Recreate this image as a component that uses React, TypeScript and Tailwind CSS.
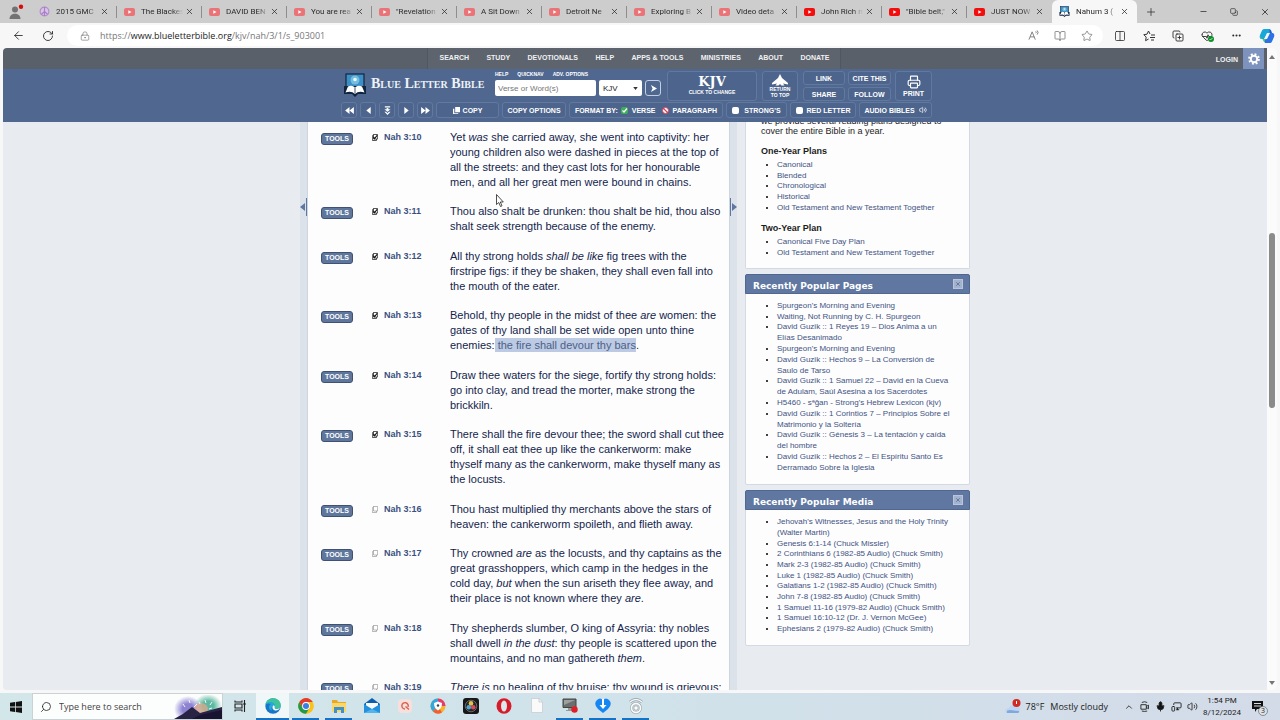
import React from "react";
import { ArrowLeft, RotateCw, LockKeyhole, BookOpen, Star, Plus, Minus, Copy, X, HeartPulse, Ellipsis, Search, ChevronUp, Mic, Volume2, Printer, Columns2, CopyPlus, MonitorSmartphone } from "lucide-react";

const tabs = [
  { title: "2015 GMC", icon: "peace" },
  { title: "The Blackes", icon: "yt-dim" },
  { title: "DAVID BEN", icon: "yt-dim" },
  { title: "You are rea", icon: "yt-dim" },
  { title: "\"Revelation", icon: "yt-dim" },
  { title: "A Sit Down", icon: "yt-dim" },
  { title: "Detroit Ne", icon: "yt-dim" },
  { title: "Exploring B", icon: "yt-dim" },
  { title: "Video deta", icon: "yt-dim" },
  { title: "John Rich m", icon: "yt" },
  { title: "\"Bible belt,\"", icon: "yt" },
  { title: "JUST NOW", icon: "yt" },
  { title: "Nahum 3 (", icon: "blb" }
];

const navItems = ["SEARCH", "STUDY", "DEVOTIONALS", "HELP", "APPS & TOOLS", "MINISTRIES", "ABOUT", "DONATE"];

const verses = [
  { ref: "Nah 3:10", marked: true, text: <>Yet <i>was</i> she carried away, she went into captivity: her<br />young children also were dashed in pieces at the top of<br />all the streets: and they cast lots for her honourable<br />men, and all her great men were bound in chains.</> },
  { ref: "Nah 3:11", marked: true, text: <>Thou also shalt be drunken: thou shalt be hid, thou also<br />shalt seek strength because of the enemy.</> },
  { ref: "Nah 3:12", marked: true, text: <>All thy strong holds <i>shall be like</i> fig trees with the<br />firstripe figs: if they be shaken, they shall even fall into<br />the mouth of the eater.</> },
  { ref: "Nah 3:13", marked: true, text: <>Behold, thy people in the midst of thee <i>are</i> women: the<br />gates of thy land shall be set wide open unto thine<br />enemies:<mark className="bg-[#bccbe3] text-[#4d6088] py-px"> the fire shall devour thy bars</mark>.</> },
  { ref: "Nah 3:14", marked: true, text: <>Draw thee waters for the siege, fortify thy strong holds:<br />go into clay, and tread the morter, make strong the<br />brickkiln.</> },
  { ref: "Nah 3:15", marked: true, text: <>There shall the fire devour thee; the sword shall cut thee<br />off, it shall eat thee up like the cankerworm: make<br />thyself many as the cankerworm, make thyself many as<br />the locusts.</> },
  { ref: "Nah 3:16", marked: false, text: <>Thou hast multiplied thy merchants above the stars of<br />heaven: the cankerworm spoileth, and flieth away.</> },
  { ref: "Nah 3:17", marked: false, text: <>Thy crowned <i>are</i> as the locusts, and thy captains as the<br />great grasshoppers, which camp in the hedges in the<br />cold day, <i>but</i> when the sun ariseth they flee away, and<br />their place is not known where they <i>are</i>.</> },
  { ref: "Nah 3:18", marked: false, text: <>Thy shepherds slumber, O king of Assyria: thy nobles<br />shall dwell <i>in the dust</i>: thy people is scattered upon the<br />mountains, and no man gathereth <i>them</i>.</> },
  { ref: "Nah 3:19", marked: false, text: <><i>There is</i> no healing of thy bruise; thy wound is grievous:</> }
];

const popularPages = [
  ["Spurgeon's Morning and Evening"],
  ["Waiting, Not Running by C. H. Spurgeon"],
  ["David Guzik :: 1 Reyes 19 – Dios Anima a un", "Elías Desanimado"],
  ["Spurgeon's Morning and Evening"],
  ["David Guzik :: Hechos 9 – La Conversión de", "Saulo de Tarso"],
  ["David Guzik :: 1 Samuel 22 – David en la Cueva", "de Adulam, Saúl Asesina a los Sacerdotes"],
  ["H5460 - sᵊḡan - Strong's Hebrew Lexicon (kjv)"],
  ["David Guzik :: 1 Corintios 7 – Principios Sobre el", "Matrimonio y la Soltería"],
  ["David Guzik :: Génesis 3 – La tentación y caída", "del hombre"],
  ["David Guzik :: Hechos 2 – El Espíritu Santo Es", "Derramado Sobre la Iglesia"]
];

const popularMedia = [
  ["Jehovah's Witnesses, Jesus and the Holy Trinity", "(Walter Martin)"],
  ["Genesis 6:1-14 (Chuck Missler)"],
  ["2 Corinthians 6 (1982-85 Audio) (Chuck Smith)"],
  ["Mark 2-3 (1982-85 Audio) (Chuck Smith)"],
  ["Luke 1 (1982-85 Audio) (Chuck Smith)"],
  ["Galatians 1-2 (1982-85 Audio) (Chuck Smith)"],
  ["John 7-8 (1982-85 Audio) (Chuck Smith)"],
  ["1 Samuel 11-16 (1979-82 Audio) (Chuck Smith)"],
  ["1 Samuel 16:10-12 (Dr. J. Vernon McGee)"],
  ["Ephesians 2 (1979-82 Audio) (Chuck Smith)"]
];

const ctl = "flex items-center justify-center rounded-[3px] border border-[#62799f] bg-[#4d658d] font-bold text-white";

function BlbLogo({ className }: { className: string }) {
  return <svg viewBox="0 0 22 24" className={className}>
      <rect x="2" y="1" width="18" height="13" fill="#3c8fc4" stroke="#12253f" strokeWidth="1.2" />
      <circle cx="11" cy="7" r="4.5" fill="#75bde0" />
      <circle cx="11" cy="6.5" r="1.8" fill="#e9f7ff" />
      <path d="M0 13h22v8H14l-3 3-3-3H0z" fill="#10233f" />
      <path d="M1.5 19.5L4 13.500q4-2 7 1 3-3 7-1l2.500 6q-6-2-9.500 1.500-3.500-3.500-9.500-1.500z" fill="#fff" />
      <path d="M11 14.500v6" stroke="#10233f" strokeWidth=".8" />
    </svg>;
}

function TabIcon({ kind }: { kind: string }) {
  if (kind === "peace") {
    return <svg viewBox="0 0 12 12" className="size-[11px] shrink-0">
        <circle cx="6" cy="6" r="4.800" fill="#d9c3e6" stroke="#b18acb" strokeWidth="1.200" />
        <path d="M6 1v10M6 6L2.500 9.300M6 6l3.500 3.300" stroke="#a67fc4" strokeWidth="1.200" />
      </svg>;
  }
  if (kind === "blb") return <BlbLogo className="size-[11px] shrink-0" />;
  return <svg viewBox="0 0 11 8" className="w-[11px] h-2 shrink-0">
      <rect width="11" height="8" rx="2" fill={kind === "yt" ? "#f40d0d" : "#ea7377"} />
      <path d="M4.300 2.200v3.600L7.500 4z" fill="#fff" />
    </svg>;
}

function BrowserChrome() {
  return <header className="shrink-0 font-['Open_Sans','Noto_Sans',sans-serif] text-[#2b2b2b]">
      <div className="h-[23px] bg-[#cdcdcd] flex items-center">
        <button aria-label="Profile" className="w-8 shrink-0 flex justify-center">
          <svg viewBox="0 0 16 16" className="size-4">
            <circle cx="7" cy="5.500" r="3" fill="#727272" />
            <path d="M1.500 15c0-7 11-7 11 0z" fill="#727272" />
            <circle cx="13" cy="2.800" r="2.200" fill="#d80b0b" />
          </svg>
        </button>
        {tabs.map(tab => <div key={tab.title} className={`w-[85px] h-full min-w-0 flex items-center pl-[7px] ${tab.icon === "blb" ? "bg-[#f7f7f7] rounded-t-md" : ""}`}>
            <TabIcon kind={tab.icon} />
            <span className="w-[42px] ml-[6px] font-[Roboto,'Noto_Sans',sans-serif] text-[8px] leading-3 whitespace-nowrap [mask-image:linear-gradient(to_right,black_75%,transparent)]">{tab.title}</span>
            <button aria-label="Close tab" className="ml-[2px]"><X size={9} strokeWidth={2} /></button>
            <span className={`w-px h-3 ml-auto ${tab.icon === "blb" || tab.title === "JUST NOW" ? "" : "bg-[#8e8e8e]"}`}></span>
          </div>)}
        <button aria-label="New tab" className="ml-2"><Plus size={12} strokeWidth={1.500} /></button>
        <div className="ml-auto flex items-center gap-[22px] pr-[10px]">
          <button aria-label="Minimize"><Minus size={9} /></button>
          <button aria-label="Restore"><Copy size={8} className="-scale-x-100 rotate-90" /></button>
          <button aria-label="Close"><X size={10} strokeWidth={2} /></button>
        </div>
      </div>
      <div className="h-[25px] bg-[#f7f7f7] flex items-center">
        <button aria-label="Back" className="ml-3"><ArrowLeft size={13} strokeWidth={1.600} /></button>
        <button aria-label="Reload" className="ml-[17px]"><RotateCw size={12} strokeWidth={1.800} /></button>
        <div className="ml-[13px] h-[21px] flex-1 bg-white rounded-full flex items-center pl-[13px] pr-[10px] text-[#777]">
          <LockKeyhole size={10} strokeWidth={1.600} />
          <span className="ml-[10px] flex-1 text-[9px] leading-3">https://<span className="text-[#1b1b1b]">www.blueletterbible.org</span>/kjv/nah/3/1/s_903001</span>
          <div className="flex items-center gap-[15px]">
            <svg viewBox="0 0 12 12" className="size-[11px]" fill="none" stroke="#777" strokeWidth="1"><path d="M1 10.500L4.500 2l3.500 8.500M2.200 7.500h4.600M8.500 3.500q1-1 0-2M10 5q2-2.200 0-4.500" /></svg>
            <BookOpen size={12} strokeWidth={1.600} />
            <Star size={12} strokeWidth={1.600} />
          </div>
        </div>
        <div className="flex items-center gap-[17px] ml-[11px] pr-[5px]">
          <Columns2 size={12} strokeWidth={1.600} />
          <svg viewBox="0 0 12 12" className="size-3" fill="none" stroke="#333" strokeWidth="1"><path d="M7 4L5.500 1 4 4.200.800 4.700l2.400 2.400-.6 3.600 3-1.700M8 5h4M7 7.500h5M8 10h3" /></svg>
          <CopyPlus size={12} strokeWidth={1.800} />
          <span className="flex items-end">
            <HeartPulse size={12} strokeWidth={1.800} />
            <svg viewBox="0 0 6 6" className="size-[6px] -ml-[5px]"><circle cx="3" cy="3" r="3" fill="#11902b" /><path d="M1.500 3l1 1 2-2" stroke="#fff" fill="none" strokeWidth=".7" /></svg>
          </span>
          <Ellipsis size={11} strokeWidth={2.500} />
          <svg viewBox="0 0 16 16" className="size-4">
            <path d="M5 1h5l2 4H8L5 11H2Q0 10 1 7l2-4.500Q3.700 1 5 1z" fill="#19a6d8" />
            <path d="M11 15H6l-2-4h4l3-6h3q2 1 1 4l-2 4.500Q12.300 15 11 15z" fill="#2d72e4" />
            <path d="M1 8q0 3 3 3h3l-2 3-1-2z" fill="#45c878" />
            <path d="M10 1q2 0 3 4h-2z" fill="#1d5bd0" />
          </svg>
        </div>
      </div>
    </header>;
}

function SiteHeader() {
  return <div className="shrink-0 font-['Liberation_Sans',Arial,sans-serif]">
      <div className="h-[21px] bg-[#596069] flex text-[7px] font-bold text-[#f0f1f3]">
        <div className="flex-1"></div>
        <nav className="w-[414px] pl-3 pr-[10px] flex items-center justify-between bg-[#5d646d] border-x border-[#505761]">
          {navItems.map(item => <a key={item} href="#">{item}</a>)}
        </nav>
        <div className="flex-1 flex items-center justify-end pr-[3px]">
          <a href="#" className="mr-[5px] pt-1">LOGIN</a>
          <button aria-label="Settings" className="w-[21px] h-full bg-[#7d93bd] flex items-center justify-center">
            <svg viewBox="0 0 16 16" className="size-3" fill="none" stroke="#fff">
              <circle cx="8" cy="8" r="4.300" strokeWidth="2.600" />
              <circle cx="8" cy="8" r="6.500" strokeWidth="2.600" strokeDasharray="2.550 2.550" />
            </svg>
          </button>
        </div>
      </div>
      <div className="h-[53px] bg-[#50688f]">
        <div className="w-[594px] mx-auto pl-[3px] pt-[2px] text-[7px] leading-[9px]">
          <div className="flex h-[30px]">
            <a href="#" className="w-[154px] shrink-0 pl-[3px] pt-[2px] flex items-start text-white">
              <BlbLogo className="w-[22px] h-6" />
              <span className="ml-[5px] text-[14px] leading-[22px] whitespace-nowrap font-['Liberation_Serif',serif] font-bold [font-variant:small-caps] text-[#eef2f8]">Blue Letter Bible</span>
            </a>
            <form className="w-[166px] shrink-0">
              <div className="flex gap-[9px] text-[5px] leading-[6px] font-bold text-white h-[9px]">
                <a href="#">HELP</a>
                <a href="#">QUICKNAV</a>
                <a href="#">ADV. OPTIONS</a>
              </div>
              <div className="flex items-center">
                <input aria-label="Verse or Word(s)" placeholder="Verse or Word(s)" className="w-[101px] h-4 rounded-[2px] bg-white px-[3px] text-[8px] placeholder:text-[#777]" />
                <span className="grid items-center ml-[3px] w-[43px]">
                  <select aria-label="Version" className="col-start-1 row-start-1 appearance-none w-full h-4 rounded-[2px] bg-white pl-1 text-[8px] text-[#222]">
                    <option>KJV</option>
                  </select>
                  <svg viewBox="0 0 6 4" className="col-start-1 row-start-1 justify-self-end mr-1 w-[5px] h-[3px] pointer-events-none"><path d="M0 0h6L3 4z" fill="#333" /></svg>
                </span>
                <button aria-label="Go" className="ml-[3px] size-4 rounded-[3px] border border-[#c2cee2] flex items-center justify-center">
                  <svg viewBox="0 0 8 8" className="size-[7px]"><path d="M1 0l7 4-7 4 2-4z" fill="#fff" /></svg>
                </button>
              </div>
            </form>
            <button className={`${ctl} ml-[6px] w-[90px] flex-col`}>
              <span className="font-['DejaVu_Serif',serif] text-[13px] leading-[13px]">KJV</span>
              <span className="text-[5px] leading-[9px]">CLICK TO CHANGE</span>
            </button>
            <button className={`${ctl} ml-[5px] w-9 flex-col text-[5px] leading-[6px]`}>
              <svg viewBox="0 0 16 12" className="w-4 h-3"><path d="M8 0l2 4 6 5v1.500l-5-1 1.500 2H9.500L8 10l-1.500 1.500h-3l1.500-2-5 1V9l6-5z" fill="#fff" /></svg>
              RETURN<br />TO TOP
            </button>
            <div className="ml-[5px] w-[42px] flex flex-col gap-[2px]">
              <button className={`${ctl} h-[14px]`}>LINK</button>
              <button className={`${ctl} h-[14px]`}>SHARE</button>
            </div>
            <div className="ml-[3px] w-[43px] flex flex-col gap-[2px]">
              <button className={`${ctl} h-[14px]`}>CITE THIS</button>
              <button className={`${ctl} h-[14px]`}>FOLLOW</button>
            </div>
            <button className={`${ctl} ml-1 w-[37px] flex-col`}>
              <Printer size={14} strokeWidth={2} />
              PRINT
            </button>
          </div>
          <div className="mt-px flex h-4 gap-[3px]">
            <button aria-label="Previous book" className={`${ctl} w-4`}><svg viewBox="0 0 10 8" className="w-[9px] h-[7px]" fill="#fff"><path d="M5 0v8L0 4zM10 0v8L5 4z" /></svg></button>
            <button aria-label="Previous chapter" className={`${ctl} w-4`}><svg viewBox="0 0 5 8" className="w-[5px] h-[7px]" fill="#fff"><path d="M5 0v8L0 4z" /></svg></button>
            <button aria-label="Jump to verse" className={`${ctl} w-4`}><svg viewBox="0 0 8 10" className="w-[7px] h-[9px]" fill="#fff"><path d="M1 0h6v1.500H1zM3 2h2v1.500h2.500L4 6.500.500 3.500H3zM.500 6.500h2L4 8l1.500-1.500h2L4 10z" /></svg></button>
            <button aria-label="Next chapter" className={`${ctl} w-4`}><svg viewBox="0 0 5 8" className="w-[5px] h-[7px]" fill="#fff"><path d="M0 0v8l5-4z" /></svg></button>
            <button aria-label="Next book" className={`${ctl} w-4`}><svg viewBox="0 0 10 8" className="w-[9px] h-[7px]" fill="#fff"><path d="M0 0v8l5-4zM5 0v8l5-4z" /></svg></button>
            <button className={`${ctl} w-[63px] gap-[3px]`}>
              <svg viewBox="0 0 8 8" className="size-[7px]" fill="#fff"><path d="M2.500 0H8v6H2.500zM0 2h1.500v5H6v1H0z" /></svg>
              COPY
            </button>
            <button className={`${ctl} w-[64px] whitespace-nowrap`}>COPY OPTIONS</button>
            <div className={`${ctl} w-[154px] whitespace-nowrap`}>
              FORMAT BY:
              <label className="flex items-center gap-1 ml-[3px]">
                <span className="grid">
                  <input type="radio" name="format" defaultChecked className="col-start-1 row-start-1 appearance-none size-[7px] rounded-[2px] bg-[#3fae5a]" />
                  <svg viewBox="0 0 7 7" className="col-start-1 row-start-1 size-[7px] pointer-events-none"><path d="M1.500 3.500L3 5l3-3.500" stroke="#fff" strokeWidth="1.200" fill="none" /></svg>
                </span>
                VERSE
              </label>
              <label className="flex items-center gap-1 ml-[6px]">
                <span className="grid">
                  <input type="radio" name="format" className="col-start-1 row-start-1 appearance-none size-[7px] rounded-full bg-white border border-[#d6435a]" />
                  <svg viewBox="0 0 7 7" className="col-start-1 row-start-1 size-[7px] pointer-events-none"><path d="M1 1l5 5" stroke="#d6435a" strokeWidth="1.300" /></svg>
                </span>
                PARAGRAPH
              </label>
            </div>
            <label className={`${ctl} w-[61px] gap-[5px]`}>
              <input type="checkbox" className="appearance-none size-[7px] rounded-[2px] bg-white" />
              STRONG'S
            </label>
            <label className={`${ctl} w-[66px] gap-1 whitespace-nowrap`}>
              <input type="checkbox" className="appearance-none size-[7px] rounded-[2px] bg-white" />
              RED LETTER
            </label>
            <button className={`${ctl} w-[73px] gap-1 whitespace-nowrap`}>
              AUDIO BIBLES
              <Volume2 size={8} />
            </button>
          </div>
        </div>
      </div>
    </div>;
}

function MarkIcon({ marked }: { marked: boolean }) {
  return <svg viewBox="0 0 8 9" className="w-[6px] h-[7px] mr-[6px]">
      <path d="M2 .500h5.500v6H6M.500 2.500v6H6v-2M.500 2.500L2 .500V6.500h4" fill="#fff" stroke={marked ? "#222" : "#888"} strokeWidth={marked ? "1" : ".8"} />
      {marked && <path d="M2 4l1.500 2L7 1.500" fill="none" stroke="#111" strokeWidth="1.600" />}
    </svg>;
}

function Links({ items }: { items: string[][] }) {
  return <ul className="list-disc pl-8 text-[8px] leading-[11px] text-black marker:text-[8px] [&>li:nth-child(3n)]:-mt-px">
      {items.map((lines, index) => <li key={index}>
          <a href="#" className="text-[#3f5382]">{lines[0]}{lines[1] && <><br />{lines[1]}</>}</a>
        </li>)}
    </ul>;
}

function Panel({ title, items }: { title: string; items: string[][] }) {
  return <section className="mt-[5px] bg-[#fdfdfe] rounded-[2px] border border-[#d3dae5]">
      <div className="h-5 -mx-px -mt-px pl-[7px] pr-[6px] rounded-t-[2px] bg-[#6078a1] border border-[#506891] flex items-center justify-between">
        <h2 className="font-['DejaVu_Sans',Verdana,sans-serif] font-bold text-[9px] leading-[18px] pt-[3px] text-white">{title}</h2>
        <button aria-label={`Close ${title}`} className="size-[10px] bg-[#a3b2cd] border border-[#b9c5da] text-[#52678f] flex items-center justify-center"><X size={6} strokeWidth={3} /></button>
      </div>
      <div className="pt-[6px] pb-[11px] -ml-px">
        <Links items={items} />
      </div>
    </section>;
}

function Sidebar() {
  return <aside className="w-[225px] ml-2 shrink-0 text-[9px] leading-[10px] text-[#1c1c1c]">
      <section className="-mt-[6px] pb-[10px] bg-[#fdfdfe] rounded-b-[2px] border border-t-0 border-[#d3dae5]">
        <p className="pl-[15px] whitespace-nowrap">we provide several reading plans designed to<br />cover the entire Bible in a year.</p>
        <h3 className="font-bold pl-[15px] mt-[10px] mb-[3px]">One-Year Plans</h3>
        <div className="-ml-px"><Links items={[["Canonical"], ["Blended"], ["Chronological"], ["Historical"], ["Old Testament and New Testament Together"]]} /></div>
        <h3 className="font-bold pl-[15px] mt-[10px] mb-[3px]">Two-Year Plan</h3>
        <div className="-ml-px"><Links items={[["Canonical Five Day Plan"], ["Old Testament and New Testament Together"]]} /></div>
      </section>
      <Panel title="Recently Popular Pages" items={popularPages} />
      <Panel title="Recently Popular Media" items={popularMedia} />
    </aside>;
}

function PageContent() {
  return <div className="flex-1 min-h-0 overflow-hidden bg-[#e8ebf0] font-['Liberation_Sans',Arial,sans-serif]">
      <div className="w-[670px] mx-auto flex">
        <div className="w-[7px] shrink-0 bg-[#dce2ea] pt-[76px]">
          <button aria-label="Previous chapter" className="w-full flex"><svg viewBox="0 0 7 18" className="w-[7px] h-[18px]"><path d="M5 5v8L0 9zM6 0h1v18H6z" fill="#6078a1" /></svg></button>
        </div>
        <main className="relative w-[423px] shrink-0 bg-[#fdfdfe] border-x border-[#ccd5e0] pt-2 pb-5 pl-[13px] flex flex-col gap-[14px]">
          {verses.map(verse => <article key={verse.ref} className="grid grid-cols-[51px_78px_1fr] items-start even:mb-px">
              <button className="w-8 h-3 mt-[3px] rounded-[3px] bg-[#60779d] border border-[#3f5273] text-white font-bold text-[7px] leading-[10px]">TOOLS</button>
              <a href="#" className="flex items-center text-[9px] leading-[15px] font-bold text-[#3b5080] whitespace-nowrap">
                <MarkIcon marked={verse.marked} />
                {verse.ref}
              </a>
              <p className="text-[11px] leading-[15px] text-[#141d4c] whitespace-nowrap">{verse.text}</p>
            </article>)}
          {/* mouse pointer */}
          <svg viewBox="0 0 8 13" className="absolute left-[188px] top-[72px] w-2 h-[13px]"><path d="M.500.500v10l2.300-2 1.700 4 1.500-.7-1.700-3.800h3z" fill="#fff" stroke="#222" strokeWidth=".8" /></svg>
        </main>
        <div className="w-[7px] shrink-0 bg-[#dce2ea] pt-[76px]">
          <button aria-label="Next chapter" className="w-full flex"><svg viewBox="0 0 7 18" className="w-[7px] h-[18px]"><path d="M2 5v8l5-4zM0 0h1v18H0z" fill="#6078a1" /></svg></button>
        </div>
        <Sidebar />
      </div>
    </div>;
}

function Scrollbar() {
  return <div className="w-[10px] shrink-0 bg-[#fbfbfb] rounded-r-md flex flex-col items-center py-[5px]">
      <svg viewBox="0 0 6 4" className="w-[6px] h-1 mt-[2px]"><path d="M0 4h6L3 0z" fill="#777" /></svg>
      <div className="flex-[174]"></div>
      <div className="flex-[174] w-[6px] rounded-full bg-[#8b8b8b]"></div>
      <div className="flex-[273]"></div>
      <svg viewBox="0 0 6 4" className="w-[6px] h-1"><path d="M0 0h6L3 4z" fill="#777" /></svg>
    </div>;
}

function AppIcon({ name }: { name: string }) {
  switch (name) {
    case "taskview":
      return <svg viewBox="0 0 12 12" className="size-3" fill="none" stroke="#222" strokeWidth="1.100"><path d="M1 .500V2h7V.500M1 11.500V10h7v1.500M1 4h7v4H1zM10.500 0v12" /><path d="M9.500 3h2v2h-2z" fill="#222" stroke="none" /></svg>;
    case "edge":
      return <svg viewBox="0 0 16 16" className="size-4">
          <circle cx="8" cy="8" r="7.700" fill="#1577c8" />
          <path d="M.400 7C1 2.500 4.500.300 8 .300c4.500 0 7.700 3 7.700 6.700 0 2.500-2 4-4.200 4-1.500 0-2.300-.8-1.800-1.800C10.500 7 8.500 4.500 5.500 4.500 3 4.500 1 5.700.400 7z" fill="#3fc49a" />
          <path d="M.400 7C1.500 4.500 4 3.700 6 4c3 .4 4.500 3 3.700 5.200C7 7.500 5.500 10 7 12.500 3 12 3.500 7 6 6 3.500 4.800 1.500 5.500.400 7z" fill="#2ba6dd" />
          <path d="M9.700 9.200c-.5 1 .3 1.800 1.800 1.800 1.500 0 2.800-.6 3.500-1.500-.8 2-2 3-4 3-3 0-4.300-2.500-3-4.500.6-.8 1.900-.3 1.700 1.200z" fill="#fff" />
        </svg>;
    case "chrome":
      return <svg viewBox="0 0 16 16" className="size-4">
          <circle cx="8" cy="8" r="7.800" fill="#fbc116" />
          <path d="M1.300 4A7.800 7.800 0 0 1 14.800 4H8L4.600 10z" fill="#e33b2e" />
          <path d="M1.300 4A7.800 7.800 0 0 0 8 15.800L11.400 10H4.600z" fill="#229a4a" />
          <circle cx="8" cy="8" r="3.900" fill="#fff" /><circle cx="8" cy="8" r="3" fill="#397fe8" />
        </svg>;
    case "folder":
      return <svg viewBox="0 0 16 14" className="w-4 h-[14px]"><path d="M1 1h5l1 2h8v10H1z" fill="#e9a825" /><path d="M1 4h14v9H1z" fill="#fbd768" /><path d="M3 14V8h10v6h-3v-3H6v3z" fill="#3f91ce" /></svg>;
    case "mail":
      return <svg viewBox="0 0 16 15" className="w-4 h-[15px]"><path d="M0 6l8-6 8 6v9H0z" fill="#0d5fae" /><path d="M2 5h12v6H2z" fill="#f7fbff" /><path d="M0 6l8 5 8-5v9H0z" fill="#2490dc" /><path d="M0 15l8-4 8 4z" fill="#50b4f0" /></svg>;
    case "quick":
      return <svg viewBox="0 0 14 14" className="size-[14px]"><rect width="14" height="14" rx="4" fill="#f6dfdc" /><path d="M7 10a3.200 3.200 0 1 1 3-2M7.500 7.500L11 10.500" fill="none" stroke="#d8624e" strokeWidth="1.400" /></svg>;
    case "shield":
      return <svg viewBox="0 0 16 16" className="size-4"><circle cx="8" cy="8" r="7.500" fill="#f4b52b" /><path d="M8 .500A7.500 7.500 0 0 0 3 13.500L8 8z" fill="#34a7df" /><path d="M8 .500A7.500 7.500 0 0 1 15.500 8L8 8z" fill="#e43c72" /><path d="M3 13.500a7.500 7.500 0 0 0 9 1L8 8z" fill="#ef6030" /><path d="M8 3.500l4 1.500c0 4-1.500 6-4 7.500C5.500 11 4 9 4 5z" fill="#fff" /><circle cx="8" cy="7.500" r="1.200" fill="#345" /></svg>;
    case "resolve":
      return <svg viewBox="0 0 16 16" className="size-4"><rect width="16" height="16" rx="3" fill="#171717" /><circle cx="8" cy="8" r="5.800" fill="#282828" stroke="#888" strokeWidth=".7" /><circle cx="8" cy="5.400" r="2.300" fill="#e2c44b" /><circle cx="5.800" cy="9.300" r="2.300" fill="#4da9d4" /><circle cx="10.200" cy="9.300" r="2.300" fill="#d94b5c" /></svg>;
    case "opera":
      return <svg viewBox="0 0 16 16" className="size-4"><ellipse cx="8" cy="8" rx="7.500" ry="7.700" fill="#d61b2b" /><ellipse cx="8" cy="8" rx="3" ry="5.500" fill="#dbe8ed" /></svg>;
    case "file":
      return <svg viewBox="0 0 12 15" className="w-3 h-[15px]"><path d="M.500.500h7.500l3.500 3.500v10.500H.500z" fill="#fafafa" stroke="#c5cacc" strokeWidth=".7" /><path d="M8 .500V4h3.500" fill="none" stroke="#bbb" strokeWidth=".7" /></svg>;
    case "recorder":
      return <svg viewBox="0 0 16 15" className="w-4 h-[15px]"><path d="M1 1h13v8.500H1z" fill="#6a6e6e" stroke="#404444" /><path d="M2 2h11L2 7z" fill="#9da19e" /><path d="M6 10h4v2H6zM4 12h7v1H4z" fill="#999" /><circle cx="12.500" cy="11.500" r="3.200" fill="#e01e26" /></svg>;
    case "download":
      return <svg viewBox="0 0 16 16" className="size-4"><path d="M2 2q3-3 6 0 3-3 6 0 4 4-1 9l-5 4-5-4Q-2 6 2 2z" fill="#1686f3" /><path d="M7 1h2v6h2.500L8 11 4.500 7H7z" fill="#fff" /></svg>;
    default:
      return <svg viewBox="0 0 16 16" className="size-4" fill="none" stroke="#f8fafb"><path d="M2 4q6-5 12 0" stroke="#929ba0" strokeWidth="2.800" /><path d="M2 4q6-5 12 0" strokeWidth="1.600" /><circle cx="8" cy="10" r="4.500" stroke="#929ba0" strokeWidth="2.800" /><circle cx="8" cy="10" r="4.500" strokeWidth="1.800" /><circle cx="8" cy="10" r="2.200" fill="#fff" stroke="#929ba0" strokeWidth=".7" /></svg>;
  }
}

const apps = [
  { name: "taskview", open: false }, { name: "edge", open: true }, { name: "chrome", open: true }, { name: "folder", open: true },
  { name: "mail", open: false }, { name: "quick", open: false }, { name: "shield", open: false }, { name: "resolve", open: false },
  { name: "opera", open: false }, { name: "file", open: false }, { name: "recorder", open: true }, { name: "download", open: true }, { name: "camera", open: true }
];

function Taskbar() {
  return <footer className="h-[27px] shrink-0 flex items-center bg-linear-to-r from-[#d3e7ea] via-[#d0e2ea] to-[#d3dbe8] font-['Open_Sans','Noto_Sans',sans-serif] text-[#222]">
      <button aria-label="Start" className="w-8 flex justify-center">
        <svg viewBox="0 0 12 12" className="size-3" fill="#111"><path d="M0 1.700l5-.7v4.600H0zM5.800.900L12 0v5.600H5.800zM0 6.400h5V11l-5-.7zM5.800 6.400H12V12l-6.200-.9z" /></svg>
      </button>
      <div className="w-[191px] h-full bg-[#fcfdfd] border border-[#c9d2d4] flex items-center pl-[7px]">
        <Search size={12} strokeWidth={1.600} className="-scale-x-100" />
        <input aria-label="Type here to search" placeholder="Type here to search" className="flex-1 min-w-0 ml-[7px] text-[9px] placeholder:text-[#444]" />
        <svg viewBox="0 0 48 24" className="w-12 h-6 self-end">
          <defs>
            <radialGradient id="violet"><stop offset=".4" stopColor="#8d83d3" /><stop offset="1" stopColor="#8d83d3" stopOpacity="0" /></radialGradient>
            <radialGradient id="mint"><stop offset=".4" stopColor="#5cb9a0" /><stop offset="1" stopColor="#5cb9a0" stopOpacity="0" /></radialGradient>
          </defs>
          <ellipse cx="14" cy="14" rx="14" ry="13" fill="url(#violet)" />
          <ellipse cx="34" cy="11" rx="14" ry="12" fill="url(#mint)" />
          <ellipse cx="27" cy="14" rx="7" ry="6" fill="#e8a58c" opacity=".7" />
          <path d="M9 9l2 3M15 5l1 3M20 12l3-3M31 5l1 3M38 7l-2 3M25 7l1 2M35 14l3-1" stroke="#f5f3ff" strokeWidth="1" />
          <path d="M0 24q10-5 18-12 4 3 8 6l22-6v12z" fill="#282344" />
          <path d="M18 24l8-4 22-5v9z" fill="#171330" />
        </svg>
      </div>
      {apps.map(app => <button key={app.name} aria-label={app.name} className={`w-[33px] h-full flex flex-col items-center ${app.name === "edge" ? "bg-[#f0f7f9]" : "px-[3px]"}`}>
          <span className="flex-1 flex items-center"><AppIcon name={app.name} /></span>
          <span className={`w-full h-[2px] ${app.open ? "bg-[#1572c4]" : ""}`}></span>
        </button>)}
      <div className="ml-auto flex items-center text-[9px] leading-3 whitespace-nowrap">
        <svg viewBox="0 0 16 16" className="size-4"><path d="M1 14q-2-4 3-5 2-5 7-2 4 0 4 4 0 3-2 3z" fill="#bdd5f3" /><path d="M2 14q-1-3 3-3l9 1q0 2-1 2z" fill="#7fa8de" /><circle cx="11.500" cy="4" r="4" fill="#cf2a24" /><path d="M11.500 2v3" stroke="#fff" /></svg>
        <span className="ml-[5px]">78°F</span>
        <span className="ml-[6px]">Mostly cloudy</span>
        <ChevronUp size={10} strokeWidth={2} className="ml-[16px]" />
        <svg viewBox="0 0 10 12" className="w-[9px] h-[11px] ml-[6px]" fill="none" stroke="#222"><path d="M1 4h6v5H1zM7 6l2.500-1.500v4L7 7M2 1.500q3-1.500 6 0M2 11q3 1 6 0" /></svg>
        <Mic size={11} fill="#111" className="ml-[6px]" />
        <MonitorSmartphone size={11} strokeWidth={2} className="ml-[5px] -scale-x-100" />
        <Volume2 size={11} strokeWidth={1.800} className="ml-[5px]" />
        <div className="ml-1 w-10 font-[Roboto,'Noto_Sans',sans-serif] text-[8px] leading-3 text-center"><div>1:54 PM</div><div>8/12/2024</div></div>
        <button aria-label="3 notifications" className="relative ml-[10px] mr-3 w-4 h-5">
          <svg viewBox="0 0 16 20" className="w-4 h-5"><path d="M0 4h11v8H5l-2 3v-3H0z" fill="#111" /><path d="M2 6.500h7M2 9h7" stroke="#d5dfe9" /><circle cx="11" cy="14" r="4.500" fill="#dbe2ea" stroke="#777" strokeWidth=".8" /></svg>
          <span className="absolute left-[7px] top-[9px] w-2 text-center text-[7px] leading-[10px]">3</span>
        </button>
      </div>
    </footer>;
}

export default function App() {
  return <div className="h-screen flex flex-col overflow-hidden bg-[#f7f7f7]">
      <BrowserChrome />
      <div className="flex-1 min-h-0 flex pl-[3px] pr-[3px] mb-[3px]">
        <div className="flex-1 min-w-0 flex flex-col rounded-l-[4px] overflow-hidden">
          <SiteHeader />
          <PageContent />
        </div>
        <Scrollbar />
      </div>
      <Taskbar />
    </div>;
}
